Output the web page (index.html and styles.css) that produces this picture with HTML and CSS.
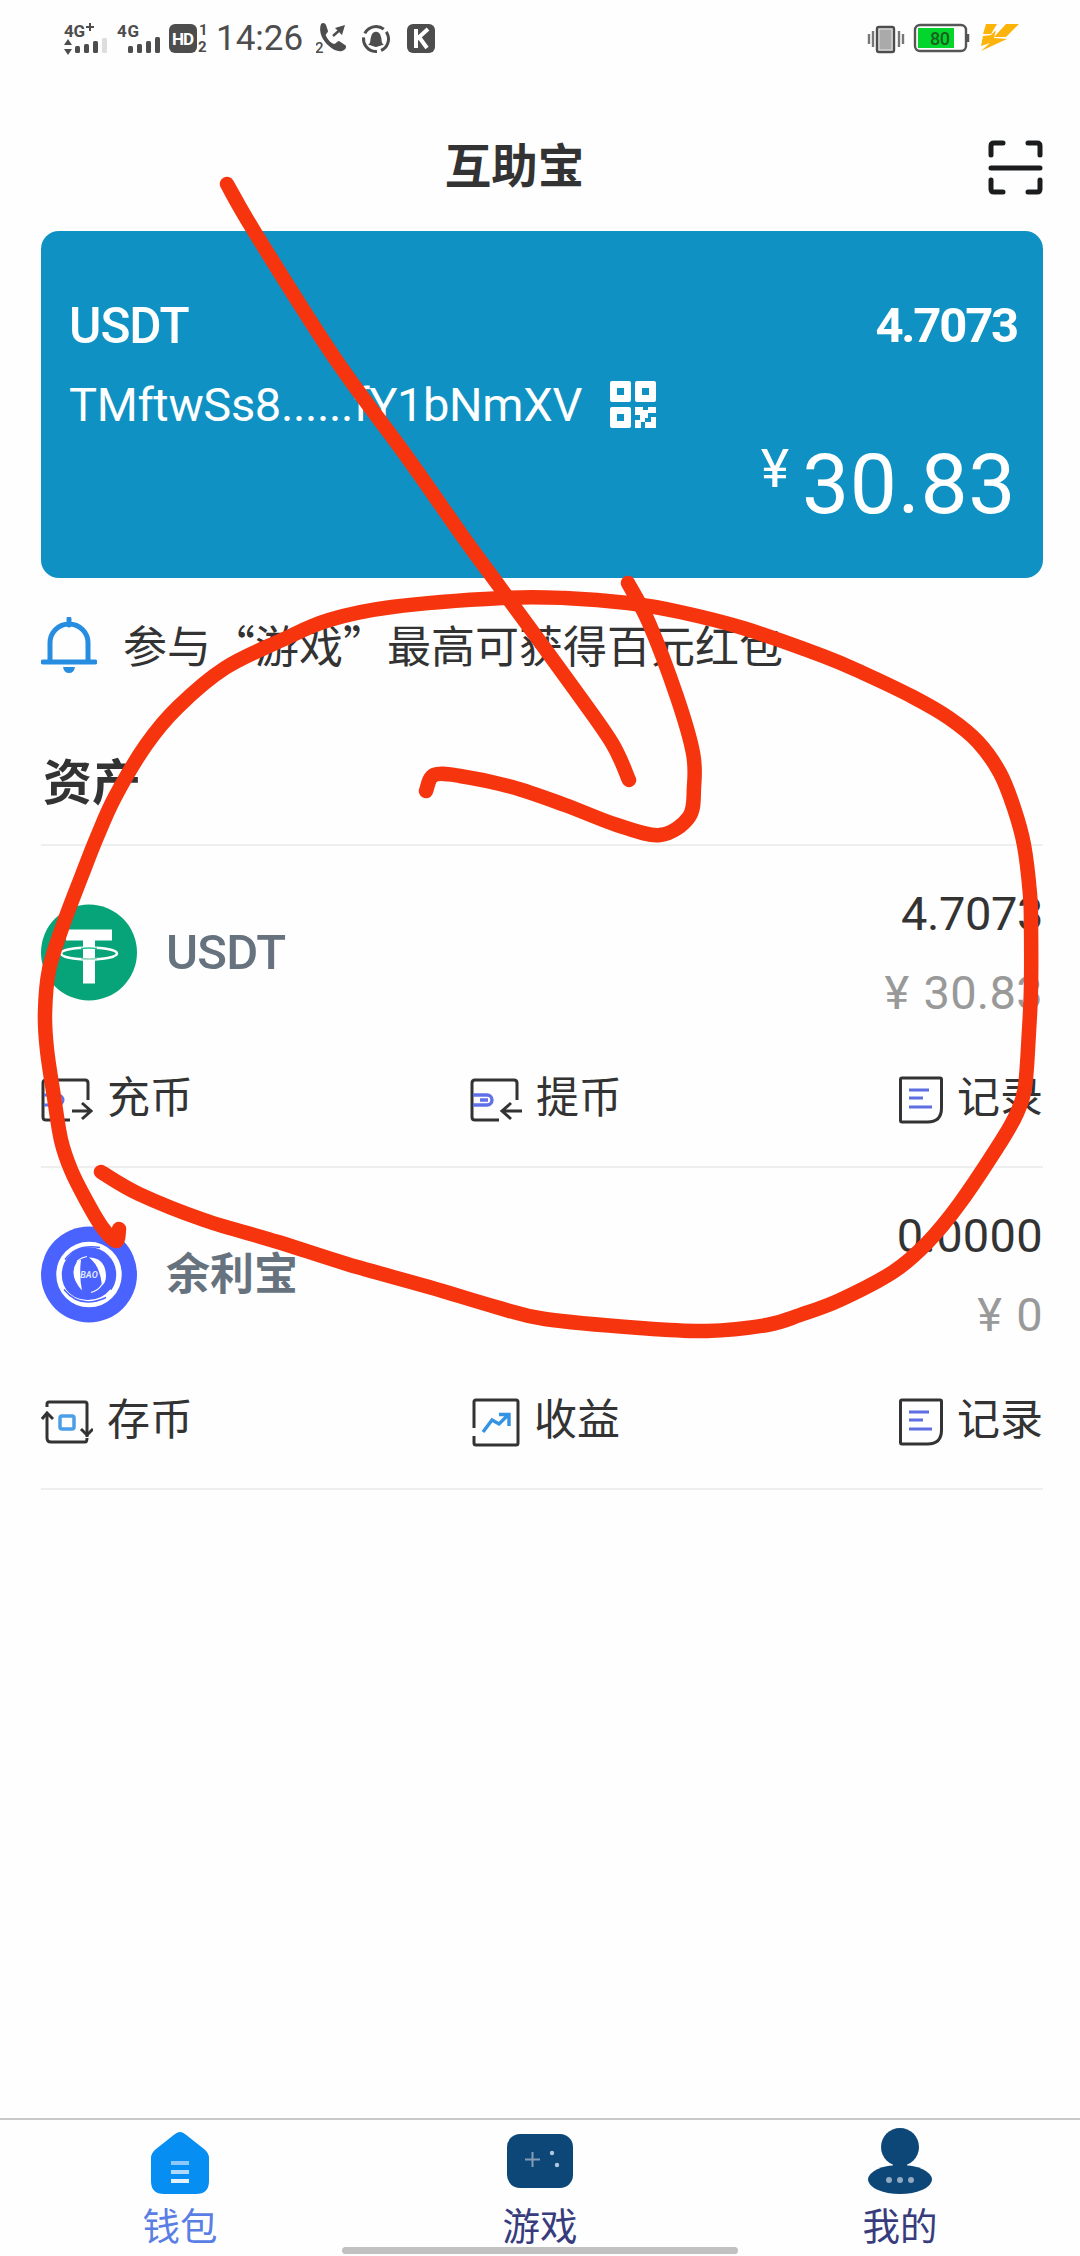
FILE: index.html
```html
<!DOCTYPE html>
<html lang="zh-CN">
<head>
<meta charset="utf-8">
<title>互助宝</title>
<link rel="stylesheet" href="styles.css">
</head>
<body>
<div class="phone">
  <header class="status">
    <svg class="status-left" width="156" height="36" viewBox="0 0 156 36" fill="#4d4d4d">
      <text class="net" x="0" y="17" textLength="21">4G</text>
      <path d="M22 7h8M26 3v8" stroke="#4d4d4d" stroke-width="2"/>
      <path d="M0 25l4-6 4 6zM0 29h8l-4 6z"/>
      <rect x="11" y="26" width="5" height="7" rx="1.5"/><rect x="20" y="24" width="5" height="9" rx="1.5"/><rect x="29" y="21" width="5" height="12" rx="1.5"/><rect x="38" y="18" width="5" height="15" rx="1.5" fill="#ddd"/>
      <text class="net" x="53" y="17" textLength="22">4G</text>
      <rect x="64" y="26" width="5" height="7" rx="1.5"/><rect x="73" y="24" width="5" height="9" rx="1.5"/><rect x="82" y="21" width="5" height="12" rx="1.5"/><rect x="91" y="17" width="5" height="16" rx="1.5"/>
      <rect x="105" y="4" width="28" height="29" rx="6"/>
      <text class="hd" x="108" y="25" textLength="22">HD</text>
      <text class="sim" x="135" y="15">1</text><text class="sim" x="134" y="32">2</text>
    </svg>
    <span class="clock">14:26</span>
    <svg class="status-apps" width="124" height="36" viewBox="0 0 124 36" fill="#4d4d4d">
      <path d="M5 4c2-2 4-1 5 1l2 6c0 2-3 3-2 5 2 4 5 7 8 8 2 0 3-3 5-3l6 4c2 1 1 4-1 5-4 3-11 0-15-4C7 21 2 12 5 4z"/>
      <path d="M17 16l9-8" stroke="#4d4d4d" stroke-width="2.5"/><path d="M19 8l10-3-3 10z"/>
      <text class="sim2" x="-1" y="33">2</text>
      <circle cx="60" cy="19" r="12.5" fill="none" stroke="#4d4d4d" stroke-width="3" stroke-dasharray="22 4.180" transform="rotate(-35 60 19)"/>
      <path d="M52 25c3-2 2-5 3-8 1-7 9-7 10 0 1 3 0 6 3 8-3 0-4 1-8 2-4-1-5-2-8-2z"/>
      <rect x="91" y="4" width="28" height="29" rx="6"/>
      <path d="M100 9v19M112 9l-11 10M103 17l8 11" fill="none" stroke="#fff" stroke-width="4"/>
    </svg>
    <svg class="status-right" width="156" height="36" viewBox="0 0 156 36">
      <path d="M3 14v10M7 11v16M33 11v16M37 14v10" stroke="#777" stroke-width="2.4"/>
      <rect x="11" y="7" width="17" height="25" rx="2" fill="#aaa" stroke="#4d4d4d" stroke-width="2.4"/>
      <rect x="13" y="9" width="13" height="21" fill="none" stroke="#ddd" stroke-width="1.2"/>
      <rect x="49" y="5" width="51" height="26" rx="5" fill="#fff" stroke="#555" stroke-width="2.4"/>
      <rect x="52" y="8" width="36" height="20" fill="#04d52c"/><path d="M102 14v8" stroke="#555" stroke-width="2.5"/>
      <text class="pct" x="64" y="25" textLength="20">80</text>
      <g fill="#fdb40a"><path d="M120 4h11l-6 10h-8z"/><path d="M140 4h13l-13 13h-12z"/><path d="M117 16l8-1 5-5-2 8 13 1-26 12 9-8-9 3z"/></g>
    </svg>
  </header>

  <div class="titlebar">
    <h1 class="title">互助宝</h1>
    <svg class="scan" width="56" height="56" viewBox="0 0 56 56" fill="none" stroke="#1b1c1e" stroke-width="5" stroke-linecap="round" stroke-linejoin="round">
      <path d="M3 15V6q0-3 3-3h9M40 3h9q3 0 3 3v9M3 40v9q0 3 3 3h9M40 52h9q3 0 3-3v-9M3 28h49"/>
    </svg>
  </div>

  <section class="card">
    <div class="card-row"><span class="coin">USDT</span><span class="balance">4.7073</span></div>
    <div class="address-row">
      <span class="address">TMftwSs8......fY1bNmXV</span>
      <svg width="46" height="47" viewBox="0 0 46 47" fill="#fff">
        <path fill-rule="evenodd" d="M2 0h17q2 0 2 2v17q0 2-2 2H2q-2 0-2-2V2q0-2 2-2zM7 7v7h7V7zM27 0h17q2 0 2 2v17q0 2-2 2H27q-2 0-2-2V2q0-2 2-2zM32 7v7h7V7zM2 26h17q2 0 2 2v17q0 2-2 2H2q-2 0-2-2V28q0-2 2-2zM7 33v7h7v-7z"/>
        <path d="M25 26h8v3h5v-3h8v6h-8v5h-3v4h-4v6h-6v-8h5v-5h-5zM41 36h5v11H35v-6h6z"/>
      </svg>
    </div>
    <div class="fiat"><span class="yen">¥</span><span class="amount">30.83</span></div>
  </section>

  <div class="notice">
    <svg width="56" height="56" viewBox="0 0 56 56" fill="none" stroke="#268de0" stroke-width="5">
      <path d="M28 2v6M9 44V26a19 19 0 0 1 38 0v18" stroke-linecap="round"/><path d="M2 45h52" stroke-linecap="round"/><path d="M22 50h12q-1 6-6 6t-6-6z" fill="#268de0" stroke="none"/>
    </svg>
    <span class="notice-text">参与“游戏”最高可获得百元红包</span>
  </div>

  <h2 class="section-title">资产</h2>

  <section class="asset">
    <div class="asset-main">
      <svg class="logo" width="96" height="97" viewBox="0 0 96 96">
        <circle cx="48" cy="48" r="48" fill="#06a478"/>
        <ellipse cx="48" cy="49" rx="28" ry="6" fill="none" stroke="#fff" stroke-width="2.5"/>
        <path d="M25 25h46v11H54v43H42V36H25z" fill="#fff"/>
        <path d="M40 44q8-1 16 0" stroke="#25c296" stroke-width="1.5" fill="none"/><path d="M40 54q8 1 16 0" stroke="#8fd3bd" stroke-width="1.5" fill="none"/>
      </svg>
      <span class="name">USDT</span>
      <div class="values"><span class="qty qty-usdt">4.7073</span><span class="cny"><span class="cny-sign">¥</span>30.83</span></div>
    </div>
    <div class="actions">
      <a class="action"><svg width="52" height="50" viewBox="0 0 52 50" fill="none" stroke="#333" stroke-width="3"><path d="M29 45H5q-3 0-3-3V8q0-3 3-3h39q3 0 3 3v17"/><path d="M31 36h18M41 28l9 8-9 8"/><path d="M3 20h14a4.500 4.500 0 0 1 0 10H3M10 25h8" stroke="#6071e8"/></svg><span>充币</span></a>
      <a class="action"><svg width="52" height="50" viewBox="0 0 52 50" fill="none" stroke="#333" stroke-width="3"><path d="M29 45H5q-3 0-3-3V8q0-3 3-3h39q3 0 3 3v17"/><path d="M52 36H33M41 28l-9 8 9 8"/><path d="M3 20h14a4.500 4.500 0 0 1 0 10H3M10 25h8" stroke="#6071e8" stroke-width="3.400"/></svg><span>提币</span></a>
      <a class="action"><svg width="44" height="50" viewBox="0 0 44 50" fill="none" stroke="#333" stroke-width="3"><path d="M3 3h38q1.500 0 1.500 1.500V33q0 14-14 14H3q-1.500 0-1.500-1.500V4.500Q1.500 3 3 3z"/><path d="M10 15h20M10 23h14M10 32h23" stroke="#5f6fe3"/></svg><span>记录</span></a>
    </div>
  </section>

  <section class="asset">
    <div class="asset-main">
      <svg class="logo" width="96" height="97" viewBox="0 0 96 96">
        <circle cx="48" cy="48" r="48" fill="#4a63fe"/>
        <g fill="none" stroke="#fff"><circle cx="48" cy="48" r="30" stroke-width="5.500"/><path d="M22 63a31 31 0 0 0 49 1" stroke-width="4"/><path d="M24 33q12-16 35-12" stroke="#4a63fe" stroke-width="1.500"/><path d="M23 63q16 20 42 8" stroke="#4a63fe" stroke-width="1.500"/><path d="M36 35q4-4 10-5M50 66a18 18 0 0 0 11-8" stroke-width="1.200"/></g>
        <path d="M36 35q-9 14 5 29-3-15-1-31zM48 31q16 0 17 18 0 7-4 10-2-20-13-28z" fill="#fff"/>
        <text class="bao" x="48" y="51.500" text-anchor="middle">BAO</text>
      </svg>
      <span class="name name-cn">余利宝</span>
      <div class="values"><span class="qty">0.0000</span><span class="cny"><span class="cny-sign">¥</span>0</span></div>
    </div>
    <div class="actions">
      <a class="action"><svg width="52" height="50" viewBox="0 0 52 50" fill="none" stroke="#333" stroke-width="3"><path d="M6 10V7q0-2 2-2h36q2 0 2 2v33M6 18v23q0 4 4 4h34q2 0 2-4"/><path d="M1 22l5-6 6 6M40 32l6 6 6-6"/><rect x="19" y="19" width="14" height="13" rx="2" stroke="#4b9fe8" stroke-width="3.500"/></svg><span>存币</span></a>
      <a class="action"><svg width="48" height="50" viewBox="0 0 48 50" fill="none" stroke="#333" stroke-width="3"><path d="M2 31V5q0-2 2-2h40q2 0 2 2v41q0 2-2 2H4q-2 0-2-2v-7"/><path d="M11 35l9-12 7 4 9-9M27 17.500h10V29" stroke="#3494e2" stroke-width="3.400"/></svg><span>收益</span></a>
      <a class="action"><svg width="44" height="50" viewBox="0 0 44 50" fill="none" stroke="#333" stroke-width="3"><path d="M3 3h38q1.500 0 1.500 1.500V33q0 14-14 14H3q-1.500 0-1.500-1.500V4.500Q1.500 3 3 3z"/><path d="M10 15h20M10 23h14M10 32h23" stroke="#5f6fe3"/></svg><span>记录</span></a>
    </div>
  </section>

  <nav class="tabs">
    <a class="tab tab-active"><svg width="66" height="68" viewBox="0 0 66 68"><path d="M28 6q5-4 10 0l19 15q5 4 5 9v23q0 13-13 13H17Q4 66 4 53V30q0-5 5-9z" fill="#078ef3"/><path d="M24 35h18" stroke="#8cc8fa" stroke-width="4"/><path d="M24 44h18" stroke="#aed8fc" stroke-width="4"/><path d="M24 53h18" stroke="#e2f2ff" stroke-width="4"/></svg><span>钱包</span></a>
    <a class="tab"><svg width="66" height="68" viewBox="0 0 66 68"><rect x="0" y="6" width="66" height="54" rx="13" fill="#0d4777"/><path d="M18 31.500h15M25.500 24v15" stroke="#819cb8" stroke-width="2"/><circle cx="45" cy="25" r="2.200" fill="#b3c7dc"/><circle cx="50" cy="37" r="2.200" fill="#b3c7dc"/></svg><span>游戏</span></a>
    <a class="tab"><svg width="66" height="68" viewBox="0 0 66 68"><circle cx="33" cy="19" r="19" fill="#0d4777"/><ellipse cx="33" cy="51.500" rx="32" ry="14.500" fill="#0d4777"/><path d="M26 34h14v6H26z" fill="#0d4777"/><g fill="#91a9c1"><circle cx="22" cy="52" r="3"/><circle cx="33" cy="52" r="3"/><circle cx="44" cy="52" r="3"/></g></svg><span>我的</span></a>
  </nav>
  <div class="home-bar"></div>

  <!-- Freehand red marker strokes drawn over the screen -->
  <svg class="marker" width="1080" height="2256" viewBox="0 0 1080 2256">
    <path data-points="227,184 254,231 334,357 407,457 466,541 502,590 575,690 612,743 629,780"/>
    <path data-points="628,583 649,623 677,697 693,753 694,787 689,817 660,835 617,825 565,805 512,787 460,776 434,775 426,791"/>
    <path data-points="101,1172 139,1194 204,1220 278,1242 347,1264 429,1287 496,1307 545,1319 640,1328 707,1331 767,1325 800,1315 840,1300 893,1272 927,1243 960,1203 1002,1140 1017,1113 1025,1087 1029,1031 1031,987 1031,924 1030,894 1024,845 1014,808 1000,773 978,742 949,718 913,697 863,673 823,656 743,628 680,612 628,603 565,598 502,598 392,607 329,620 282,640 225,668 178,707 146,745 115,797 97,837 82,875 63,925 49,970 45,1013 47,1050 54,1097 61,1140 71,1170 86,1200 102,1227 116,1241 119,1229"/>
  </svg>
</div>
<script src="marker.js"></script>
</body>
</html>
```
FILE: styles.css
```css
* { box-sizing: border-box; }
body { margin: 0; background: #fefefe; }
.phone {
  position: relative;
  display: flex;
  flex-direction: column;
  width: 1080px;
  height: 2256px;
  background: #fefefe;
  color: #333;
  font-family: Roboto, "Noto Sans CJK SC", sans-serif;
  overflow: hidden;
}
svg { display: block; flex: none; }

.status { display: flex; height: 78px; padding: 20px 58px 0 64px; flex: none; }
.clock { width: 95px; margin-left: -4px; font-size: 35px; line-height: 37px; color: #4d4d4d; }
.status-apps { margin-left: 5px; }
.status-right { margin-left: auto; }
.net { font: 700 17px Roboto, sans-serif; }
.hd { font: 700 17px Roboto, sans-serif; fill: #fff; }
.sim { font: 700 15px Roboto, sans-serif; }
.sim2 { font: 500 15px Roboto, sans-serif; }
.pct { font: 500 18px Roboto, sans-serif; fill: #17601e; }

.titlebar { display: grid; grid-template-columns: 1fr auto; align-items: center; height: 153px; padding: 0 36px 0 41px; flex: none; }
.title { margin: 0; padding-top: 24px; text-align: center; font-size: 46.5px; line-height: 60px; font-weight: 700; }
.scan { margin-top: 26px; }

.card { width: 1002px; height: 347px; margin-left: 41px; padding: 65px 27px 0 28px; background: #0f92c3; border-radius: 18px; color: #fff; flex: none; }
.card-row { display: flex; justify-content: space-between; line-height: 60px; }
.coin { font-size: 49.5px; font-weight: 500; letter-spacing: -1px; }
.balance { font-size: 49px; font-weight: 700; letter-spacing: -2.2px; margin-right: -1px; }
.address-row { display: flex; align-items: center; gap: 29px; height: 60px; margin-top: 18px; font-size: 47px; }
.address { width: 512px; white-space: nowrap; letter-spacing: -0.35px; }
.fiat { display: flex; justify-content: flex-end; align-items: flex-start; height: 100px; }
.yen { font-size: 54px; line-height: 60px; margin-right: 13px; margin-top: 5px; }
.amount { font-size: 84px; line-height: 100px; margin-top: 1px; letter-spacing: 0.6px; }

.notice { display: flex; align-items: center; gap: 26px; height: 56px; margin: 39px 0 0 41px; font-size: 44px; flex: none; }
.notice-text { font-family: "Noto Sans CJK SC", sans-serif; line-height: 56px; white-space: nowrap; padding-bottom: 3px; }
.section-title { height: 171px; margin: 0; padding: 75px 0 0 43px; font-size: 49px; line-height: 72px; font-weight: 700; flex: none; }

.asset { width: 1002px; height: 322px; margin-left: 41px; border-top: 2px solid #eee; flex: none; }
.asset + .asset { height: 324px; border-bottom: 2px solid #eee; }
.asset-main { display: flex; align-items: center; height: 212px; }
.name { margin-left: 29px; color: #66737f; font-size: 49px; font-weight: 500; letter-spacing: -0.8px; }
.name-cn { font-size: 44px; font-weight: 700; letter-spacing: 0; padding-bottom: 6px; }
.values { display: flex; flex-direction: column; margin-left: auto; padding-top: 2px; text-align: right; font-size: 47px; line-height: 79px; }
.qty { letter-spacing: 0.3px; }
.qty-usdt { letter-spacing: -0.4px; }
.cny { color: #999; letter-spacing: 0.3px; }
.cny-sign { margin-right: 14px; }
.actions { display: flex; justify-content: space-between; height: 84px; align-items: center; font-size: 43px; }
.action { display: flex; align-items: center; gap: 14px; line-height: 50px; }
.action span { padding-bottom: 4px; }
.bao { font: italic 700 9px Roboto, sans-serif; fill: #dfe5ff; }

.tabs { display: flex; height: 138px; margin-top: auto; border-top: 2px solid #c9c9c9; color: #383c7c; font-size: 37.5px; flex: none; }
.tab { display: flex; flex: 1; flex-direction: column; align-items: center; padding-top: 8px; }
.tab span { line-height: 44px; margin-top: 9px; }
.tab-active { color: #5a7ee4; }
.home-bar { position: absolute; left: 342px; top: 2247px; width: 396px; height: 7px; border-radius: 4px; background: #c1c1c1; }

.marker { position: absolute; left: 0; top: 0; pointer-events: none; fill: none; stroke: #f6350f; stroke-width: 14.5px; stroke-linecap: round; stroke-linejoin: round; }
```
FILE: marker.js
```js
// Draws each marker stroke as a smooth curve through its sampled points.
document.querySelectorAll('.marker path').forEach(function (path) {
  var p = path.dataset.points.split(' ').map(function (s) { return s.split(',').map(Number); });
  var d = 'M' + p[0];
  for (var i = 0; i < p.length - 1; i++) {
    var a = p[i - 1] || p[i], b = p[i], c = p[i + 1], e = p[i + 2] || c;
    d += 'C' + [b[0] + (c[0] - a[0]) / 6, b[1] + (c[1] - a[1]) / 6,
                c[0] - (e[0] - b[0]) / 6, c[1] - (e[1] - b[1]) / 6, c[0], c[1]].join(' ');
  }
  path.setAttribute('d', d);
});
```
